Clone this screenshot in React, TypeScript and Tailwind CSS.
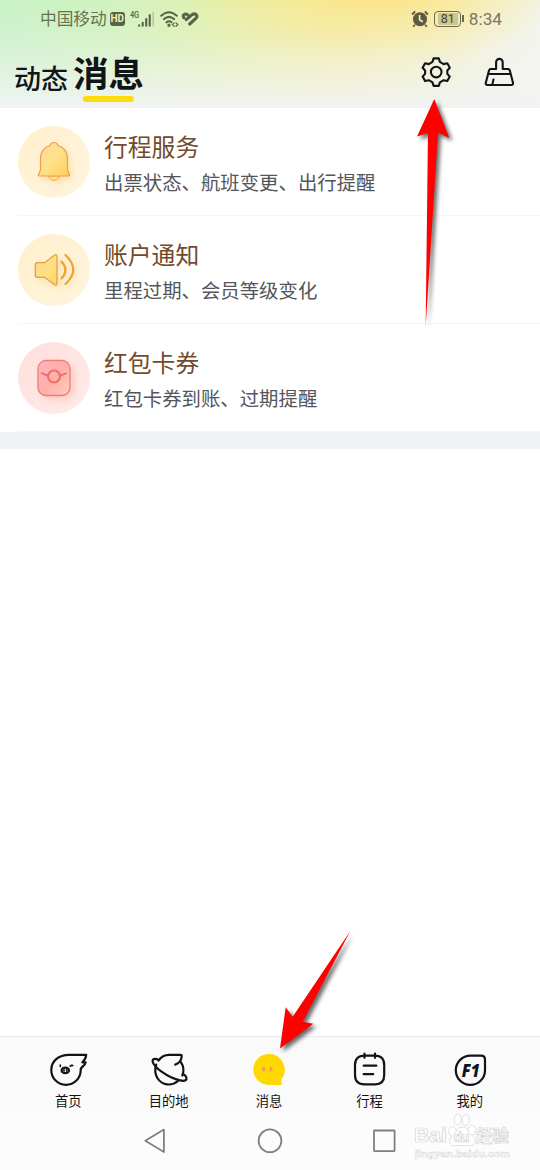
import { FC, ReactNode } from "react";

interface NoticeRowProps {
  icon: ReactNode;
  title: string;
  description: string;
  iconBg: string;
}

interface TabProps {
  icon: ReactNode;
  label: string;
}

const StatusBar: FC = () => (
  <div className="flex h-[37px] items-center pl-10 pr-[38px] text-[#68734f]">
    <span className="text-[16.7px] leading-none">中国移动</span>
    <span className="ml-[3px] flex h-[14px] w-[15px] items-center justify-center rounded-[3px] bg-[#59634a] font-[Roboto] text-[10px] font-bold leading-none text-[#e6f2bd]">
      HD
    </span>
    <span className="ml-[5px] h-[18px] w-[8px] origin-top-left scale-x-[0.8] font-[Roboto] text-[9.5px] font-bold leading-none tracking-[-0.3px]">
      4G
    </span>
    <svg width="17" height="18" viewBox="0 0 17 18" strokeLinecap="round" strokeWidth="2.1">
      <path d="M1.200 15.400v.3M4.700 12.700v3M8.200 9v6.700M11.700 5v10.700" stroke="#59634a" />
      <path d="M15.200 2.200v13.500" stroke="#bdc69a" strokeWidth="1.600" />
    </svg>
    <svg className="ml-[5px]" width="20" height="18" viewBox="0 0 20 18" fill="none" stroke="#59634a" strokeWidth="2" strokeLinecap="round">
      <path d="M1.200 5.800Q9 -1.200 16.800 5.800M3.800 9.200Q9 4.500 14.200 9.200M6.400 12.400Q9 10.200 11.400 12.100" />
      <circle cx="9" cy="15.200" r=".7" />
      <path d="M14.200 12.900l-1.800 1.700 1.800 1.700M16 12.900l1.800 1.700-1.800 1.700" strokeWidth="1.200" />
    </svg>
    <svg className="ml-px" width="18" height="16" viewBox="0 0 18 16" fill="none" stroke="#59634a" strokeWidth="3.100" strokeLinecap="round" strokeLinejoin="round">
      <path d="M2.800 6.600Q1.500 4 3.700 3.200 5.500 2.400 7.200 4.200M5.200 8.700l5.900-5.100q2.200-1.500 4-.1 1.600 1.700 0 3.600L8.700 13" />
    </svg>

    <svg className="ml-auto" width="18" height="18" viewBox="0 0 18 18" fill="none">
      <circle cx="9" cy="9.300" r="7" fill="#5e5b42" />
      <path d="M1 4.500L4.200 1.500M17 4.500L13.800 1.500M3.700 14.700l-1.400 2M14.300 14.700l1.400 2" stroke="#5e5b42" strokeWidth="1.800" />
      <path d="M8.600 5v4.700l3.200 2" stroke="#f6eeb5" strokeWidth="1.700" />
    </svg>
    <span className="ml-[5px] flex h-4 w-[27px] items-center justify-center rounded-[4px] border-[1.5px] border-[#6d6a4c] p-px">
      <span className="flex h-full w-[20px] items-center justify-center rounded-[1px] bg-[#cbc793] pt-px font-[Roboto] text-[12.5px] leading-none text-[#47452f]">
        81
      </span>
    </span>
    <span className="ml-px h-[7px] w-[1.5px] bg-[#6d6a4c]" />
    <span className="ml-[5px] mt-[2px] font-[Roboto] text-[17.2px] leading-none text-[#77766a]">8:34</span>
  </div>
);

const Header: FC = () => (
  <header className="h-[108px] bg-[linear-gradient(to_bottom,transparent_0%,#f3f4f322_30%,#f3f4f399_70%,#f1f3f3_100%),radial-gradient(ellipse_190px_80px_at_375px_-12px,#fde283_0%,#fbe68b99_45%,transparent_100%),linear-gradient(to_right,#c9f2c8_0%,#d2f2bf_22%,#e4f0ad_42%,#f2eda8_62%,#f3f0bf_80%,#f2f3e0_92%,#f2f4ec_100%)]">
    <StatusBar />
    <div className="flex h-[71px] pl-[14px] pr-6">
      <div className="pt-[22px] text-[27px] font-medium leading-[38px] text-[#10151a]">动态</div>
      <div className="ml-[5px] flex flex-col items-center">
        <div className="pt-[11px] text-[35.5px] font-bold leading-[48px] text-[#10151a]">消息</div>
        <div className="h-[6px] w-[51px] rounded-full bg-[#ffdb0b]" />
      </div>
      <svg className="ml-auto mt-5" width="30" height="30" viewBox="0 0 30 30" fill="none" stroke="#10151a" strokeWidth="2.100" strokeLinejoin="round">
        <path d="M12.600 1.400h5.200l1.100 3.500 3.700 2.200 3.700-.8 2.500 4.500-2.500 2.700v3.300l2.500 2.800-2.500 4.500-3.700-.9-3.700 2.200-1.100 3.500h-5.200l-1.100-3.500-3.700-2.200-3.700.9-2.500-4.500 2.500-2.800v-3.300l-2.500-2.700 2.500-4.500 3.700.8 3.700-2.200z" />
        <circle cx="15.200" cy="15.100" r="5.300" />
      </svg>
      <svg className="ml-[33px] mt-5" width="32" height="30" viewBox="0 0 32 30" fill="none" stroke="#10151a" strokeWidth="2.100" strokeLinejoin="round" strokeLinecap="round">
        <path d="M12.100 12V5.200a3.300 3.300 0 0 1 6.600 0V12h5.200q1.500 0 1.900 1.600l3.200 12.200q.4 2.200-1.700 2.200H3.500q-2.100 0-1.700-2.200L5 13.600Q5.400 12 6.900 12zM4.900 17h21M9.500 22.500l-1.200 5" />
      </svg>
    </div>
  </header>
);

const NoticeRow: FC<NoticeRowProps> = ({ icon, title, description, iconBg }) => (
  <div className="flex h-[108px] pl-[18px]">
    <div className={`mt-[18px] flex h-[72px] w-[72px] shrink-0 items-center justify-center rounded-full ${iconBg}`}>
      {icon}
    </div>
    <div className="-ml-[72px] flex-1 border-b border-[#f6f6f6] pl-[86px] pt-5">
      <div className="text-[23.8px] leading-9 text-[#734b2b]">{title}</div>
      <div className="text-[19.4px] leading-9 text-[#53565b]">{description}</div>
    </div>
  </div>
);

const BellIcon: FC = () => (
  <svg className="drop-shadow-[3px_4px_3px_#f8cf7b70]" width="40" height="44" viewBox="0 0 40 44">
    <defs>
      <linearGradient id="bell" x1="0" y1="0" x2="1" y2="1">
        <stop offset="0" stopColor="#ffd9a0" />
        <stop offset=".5" stopColor="#ffe18a" />
        <stop offset="1" stopColor="#ffcc58" />
      </linearGradient>
    </defs>
    <path d="M14.600 36a5.500 5.200 0 0 0 10.800 0z" fill="#ffe28c" stroke="#efa54d" />
    <path d="M16.200 5.500Q16.500 2.500 20 2.500t3.800 3C30.500 7.500 33.500 12.500 33.500 18.500v11.500l2 4.800q.4 1.200-1 1.200h-29q-1.400 0-1-1.200l2-4.800V18.500c0-6 3-11 9.700-13z" fill="url(#bell)" stroke="#ef9d4a" strokeWidth="1.200" />
  </svg>
);

const SpeakerIcon: FC = () => (
  <svg className="drop-shadow-[3px_4px_3px_#f8cf7b70]" width="42" height="40" viewBox="0 0 42 40" fill="none">
    <defs>
      <linearGradient id="speaker" x1="0" y1="0" x2="1" y2="1">
        <stop offset="0" stopColor="#ffd39b" />
        <stop offset=".6" stopColor="#ffe07e" />
        <stop offset="1" stopColor="#fdd06b" />
      </linearGradient>
    </defs>
    <path d="M4.500 12.700h7.200L21.500 5q2.500-1.300 2.500 1.300v27.300q0 2.500-2.500 1.200l-9.800-7.500H4.500q-2.200 0-2.200-2.200V15q0-2.300 2.200-2.300z" fill="url(#speaker)" stroke="#dda044" strokeWidth="1.200" />
    <path d="M28.500 11.500Q36.500 20 28.500 28.500M32.500 5Q48 20 32.500 34" stroke="#f4a02a" strokeWidth="2.200" strokeLinecap="round" />
  </svg>
);

const EnvelopeIcon: FC = () => (
  <svg className="drop-shadow-[4px_4px_3px_#f99f9a60]" width="36" height="38" viewBox="0 0 36 38" fill="none">
    <defs>
      <linearGradient id="envelope" x1="0" y1="0" x2="1" y2="1">
        <stop offset="0" stopColor="#ffb3c4" />
        <stop offset=".5" stopColor="#ffafa8" />
        <stop offset="1" stopColor="#ffcbc2" />
      </linearGradient>
    </defs>
    <rect x="2" y="1.500" width="32" height="35" rx="8" fill="url(#envelope)" stroke="#ee7d73" strokeWidth="1.300" />
    <path d="M5 14l6.800 2.700M31 14l-6.800 2.700" stroke="#f06d61" strokeWidth="1.800" />
    <circle cx="18" cy="17.500" r="6" stroke="#f06d61" strokeWidth="2" />
  </svg>
);

const Tab: FC<TabProps> = ({ icon, label }) => (
  <div className="flex flex-1 flex-col items-center pt-[13px]">
    <svg width="40" height="40" viewBox="0 0 40 40" fill="none" stroke="#101418" strokeWidth="2.200" strokeLinecap="round" strokeLinejoin="round">
      {icon}
    </svg>
    <span className="mt-px text-[13.3px] leading-5 text-[#101418]">{label}</span>
  </div>
);

const tabs: TabProps[] = [
  {
    label: "首页",
    icon: (
      <>
        <path d="M38.200 4.800H21C10.500 4.800 3.300 11 3.300 20.200a14.700 14.700 0 0 0 29.400 0c0-1.700.8-2.800 2-3.700 1.800-1.400 2.700-2.600 3-4.100h-3.300Q38 9 38.200 4.800z" />
        <ellipse cx="17.300" cy="20.400" rx="3.700" ry="2.700" />
        <path d="M16 19.900v1M18.700 19.900v1M12.300 15v1.300M22.300 16.200q1-1.400 2.400-.6" strokeWidth="1.700" />
      </>
    ),
  },
  {
    label: "目的地",
    icon: (
      <>
        <path d="M9.500 10.500C12 7 15.500 4.900 20 4.900h11.500q1.500 0 1.200 1.500c-.4 4-2.400 7-6.500 8.200M31.700 11.800c2.800 4 3.500 9 1.600 13.700M29 31C22.500 36.500 13 35.300 8.700 28.500 6 24.200 5.700 19 7.200 14.600" />
        <path d="M9.500 9.800C5.500 8.100 3.200 9 3.700 11.700c1.200 5.500 15.300 16.300 27.300 18.700 5.500 1.200 7-.5 6.400-2.700q-.4-1.500-2.300-3" />
      </>
    ),
  },
  {
    label: "消息",
    icon: (
      <>
        <path d="M20 4C11.400 4 4.300 11 4.300 19.500S11.300 35 20 35h12q1.300 0 .7-1.500l-.4-4.200A15.600 15.600 0 0 0 20 4z" fill="#ffd800" stroke="none" />
        <path d="M14.600 18.300v1.700M22 18.300v1.700" stroke="#f79a54" strokeWidth="3" />
      </>
    ),
  },
  {
    label: "行程",
    icon: (
      <path d="M15.500 3.600v4.200M26 3.600v4.200M15.500 5.700Q6 5.700 6 15v10q0 9.300 9.500 9.300h10.800q8.900 0 8.900-9.300V15Q35.200 5.700 26 5.700zM14.700 15.700h12.600M14.700 24.200h9.500" />
    ),
  },
  {
    label: "我的",
    icon: (
      <>
        <path d="M20.500 5.700H31q4 0 4 4v10.800A14.600 14.600 0 1 1 20.500 5.700z" />
        <text x="11.800" y="26.700" textLength="18" lengthAdjust="spacingAndGlyphs" className="font-['Open_Sans'] text-[17.5px] font-extrabold italic" fill="#101418" stroke="none">
          F1
        </text>
      </>
    ),
  },
];

const SystemNav: FC = () => (
  <div className="flex h-[58px] bg-[#fcfcfc] pl-[141px] pt-[15px]">
    <svg width="26" height="28" viewBox="0 0 26 28" fill="none" stroke="#808080" strokeWidth="1.800" strokeLinejoin="round">
      <path d="M4.300 13.800L22.900 2.600v22.400z" />
    </svg>
    <svg className="ml-[90px]" width="26" height="28" viewBox="0 0 26 28" fill="none" stroke="#808080" strokeWidth="1.800">
      <circle cx="13" cy="13.800" r="11.400" />
    </svg>
    <svg className="ml-[88px]" width="26" height="28" viewBox="0 0 26 28" fill="none" stroke="#808080" strokeWidth="1.800">
      <rect x="3" y="3.500" width="20.600" height="20.600" rx=".5" />
    </svg>
  </div>
);

const Watermark: FC = () => (
  <svg className="absolute bottom-0 right-0" width="130" height="62" viewBox="0 0 130 62" fill="#fff" stroke="#d2d2d2" strokeWidth=".7">
    <text x="4" y="34.300" textLength="33" lengthAdjust="spacingAndGlyphs" className="font-['Liberation_Sans'] text-[21px] font-bold">
      Bai
    </text>
    <ellipse cx="42.500" cy="23.500" rx="3.700" ry="5" />
    <ellipse cx="47.700" cy="11.500" rx="3.500" ry="5.500" />
    <ellipse cx="55.700" cy="12" rx="3.500" ry="5.500" />
    <ellipse cx="62" cy="22" rx="3.700" ry="5" />
    <path d="M52 19c-5 0-5.500 5-9 8.200C37 32 39.500 38.500 46 37.800c4-.6 8-.6 11.500 0C66 38.500 67.500 31.500 62 27.500 58 24 57.500 19 52 19z" />
    <text x="43.500" y="34.300" textLength="16" className="font-['Liberation_Sans'] text-[14px] font-bold">
      du
    </text>
    <text x="66" y="33.500" textLength="33" className="text-[16.5px] font-bold">
      经验
    </text>
    <text x="5" y="48.500" textLength="95" lengthAdjust="spacingAndGlyphs" strokeWidth=".4" className="font-['Liberation_Sans'] text-[9.5px] font-bold">
      jingyan.baidu.com
    </text>
  </svg>
);

// Red pointers drawn on top of the screen
const Pointers: FC = () => (
  <svg className="pointer-events-none absolute inset-0 drop-shadow-[3px_3px_2px_rgba(0,0,0,0.6)]" width="540" height="1170" viewBox="0 0 540 1170" fill="#fe0000">
    <path d="M434.300 99L417 136.500 428 133 425.700 326 438 132.500 449.300 138z" />
    <path d="M280 1048.500L285.700 1007.300 292.700 1016.700 350.300 931 302.700 1021.700 313.300 1023.700z" />
  </svg>
);

export default function App() {
  return (
    <div className="relative flex h-[1170px] w-[540px] flex-col overflow-hidden bg-white font-['Noto_Sans_CJK_SC',sans-serif]">
      <Header />
      <main className="flex-1">
        <NoticeRow
          icon={<BellIcon />}
          iconBg="bg-[linear-gradient(135deg,#fff0cc,#fff5df)]"
          title="行程服务"
          description="出票状态、航班变更、出行提醒"
        />
        <NoticeRow
          icon={<SpeakerIcon />}
          iconBg="bg-[linear-gradient(135deg,#fff0cc,#fff5df)]"
          title="账户通知"
          description="里程过期、会员等级变化"
        />
        <NoticeRow
          icon={<EnvelopeIcon />}
          iconBg="bg-[linear-gradient(135deg,#ffdfdb,#ffece9)]"
          title="红包卡券"
          description="红包卡券到账、过期提醒"
        />
        <div className="h-[17px] bg-[#f0f2f4]" />
      </main>
      <nav className="flex h-[76px] border-t border-[#ebebeb] bg-[#fafafa] pl-[18px] pr-5">
        {tabs.map((tab) => (
          <Tab key={tab.label} {...tab} />
        ))}
      </nav>
      <SystemNav />
      <Watermark />
      <Pointers />
    </div>
  );
}
